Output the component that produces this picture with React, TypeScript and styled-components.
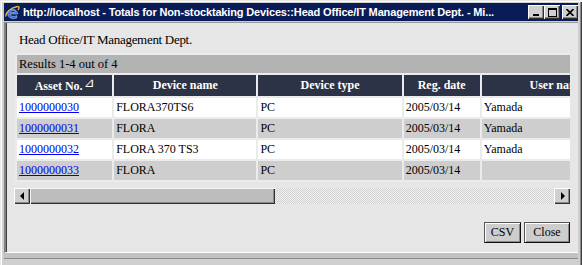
import React from 'react';
import styled, { createGlobalStyle } from 'styled-components';

const GlobalStyle = createGlobalStyle`
  body {
    margin: 0;
    background: #cfcfcf;
  }
`;

const Window = styled.div`
  width: 582px;
  height: 265px;
  box-sizing: border-box;
  display: flex;
  flex-direction: column;
  padding: 3px 4px 0 4px;
  background: #cfcfcf;
  box-shadow: inset 1px 1px #e8e8e8, inset 2px 2px #fff, inset -1px 0 #404040,
    inset -2px 0 #8a8a8a;
  overflow: hidden;
`;

const TitleBar = styled.div`
  height: 18px;
  display: flex;
  align-items: center;
  gap: 3px;
  padding: 0 0 0 1px;
  background: #0a1c58;
`;

const TitleText = styled.div`
  flex: 1;
  min-width: 0;
  white-space: nowrap;
  overflow: hidden;
  color: #fff;
  font: bold 11px 'Liberation Sans', Arial, sans-serif;
  letter-spacing: -0.15px;
`;

const Controls = styled.div`
  display: flex;
  align-items: center;
`;

const CtrlButton = styled.div<{ $gap?: boolean }>`
  width: 16px;
  height: 14px;
  box-sizing: border-box;
  margin-left: ${(p) => (p.$gap ? '2px' : '0')};
  background: #cfcfcf;
  box-shadow: inset 1px 1px #fff, inset -1px -1px #303030, inset -2px -2px #888;
  display: flex;
  align-items: center;
  justify-content: center;
`;

const Content = styled.div`
  height: 231px;
  margin-top: 1px;
  box-sizing: border-box;
  display: flex;
  flex-direction: column;
  padding: 9px 8px 0 9px;
  background: #e6e6e6;
  border-top: 1px solid #9a9a9a;
  border-left: 2px solid #808080;
  border-bottom: 1px solid #fff;
  box-shadow: inset 1px 0 #404040;
`;

const Heading = styled.div`
  margin-left: 4px;
  height: 16px;
  font: 13px/16px 'Liberation Serif', 'Times New Roman', serif;
  letter-spacing: -0.3px;
  color: #000;
`;

const TableClip = styled.div`
  margin-top: 5px;
  overflow: hidden;
  background: #ebebeb;
`;

const Table = styled.table`
  border-collapse: separate;
  border-spacing: 2px;
  table-layout: fixed;
  width: 1146px;
  font: 12px 'Liberation Serif', 'Times New Roman', serif;
  color: #000;
`;

const ResultsCell = styled.td`
  height: 18px;
  padding: 0 2px;
  background: #b3b3b3;
  font-size: 12.5px;
  text-align: left;
  white-space: nowrap;
`;

const HeadCell = styled.th`
  height: 21px;
  padding: 0 2px;
  background: #2c3346;
  color: #fff;
  font-weight: bold;
  text-align: center;
  white-space: nowrap;
`;

const SortMark = styled.span`
  font-family: 'DejaVu Sans', sans-serif;
  font-weight: normal;
  font-size: 13px;
  position: relative;
  top: -3px;
  margin-left: 1px;
`;

const Cell = styled.td<{ $alt: boolean }>`
  height: 19px;
  padding: 0 2px;
  background: ${(p) => (p.$alt ? '#cecece' : '#ffffff')};
  white-space: nowrap;
  overflow: hidden;
`;

const AssetLink = styled.a`
  color: #0000ee;
  text-decoration: underline;
`;

const Scrollbar = styled.div`
  margin-top: 6px;
  height: 16px;
  display: flex;
  width: 556px;
  margin-left: -1px;
`;

const ScrollBtn = styled.div`
  width: 16px;
  height: 16px;
  box-sizing: border-box;
  background: #cfcfcf;
  box-shadow: inset 1px 1px #fff, inset -1px -1px #303030, inset -2px -2px #8a8a8a;
  display: flex;
  align-items: center;
  justify-content: center;
`;

const Arrow = styled.div<{ $dir: 'left' | 'right' }>`
  width: 0;
  height: 0;
  border-top: 4px solid transparent;
  border-bottom: 4px solid transparent;
  ${(p) =>
    p.$dir === 'left'
      ? 'border-right: 4px solid #000; margin-left: -1px;'
      : 'border-left: 4px solid #000; margin-left: 1px;'}
`;

const Thumb = styled.div`
  width: 245px;
  height: 16px;
  box-sizing: border-box;
  background: #bdbdbd;
  box-shadow: inset 1px 1px #f4f4f4, inset -1px -1px #303030, inset -2px -2px #8a8a8a;
`;

const Track = styled.div`
  flex: 1;
  background-color: #f2f2f2;
  background-image: repeating-conic-gradient(#d0d0d0 0 25%, #f2f2f2 0 50%);
  background-size: 2px 2px;
`;

const ButtonRow = styled.div`
  margin-top: 18px;
  display: flex;
  justify-content: flex-end;
  gap: 3px;
`;

const Button = styled.button<{ $w: number }>`
  width: ${(p) => p.$w}px;
  height: 21px;
  box-sizing: border-box;
  padding: 0;
  background: #cdcdcd;
  border: 1px solid #555;
  border-right-color: #111;
  border-bottom-color: #111;
  box-shadow: inset 1px 1px #fff, inset -1px -1px #888;
  font: 12px 'Liberation Serif', 'Times New Roman', serif;
  color: #000;
`;

const FrameBottom = styled.div`
  flex: 1;
  border-top: 5px solid #c2c2c2;
  box-shadow: inset 0 1px #8a8a8a;
`;

const IeIcon = () => (
  <svg width="15" height="15" viewBox="0 0 15 15">
    <path
      d="M1 11.5 C0 8 6 2.5 12.5 1.5 C14.5 1.3 14.3 3.5 13 5"
      fill="none"
      stroke="#f2b632"
      strokeWidth="1.4"
    />
    <path
      d="M12.6 9 H5.2 C5.4 11.6 9 12.2 11.6 10.6 L12 12.6 C8.2 14.8 2.6 13.3 2.8 8.6 C3 4.3 8.4 3.2 11 5.5 C12.3 6.6 12.7 7.9 12.6 9 Z M5.3 7.3 H10.2 C9.9 4.9 5.8 4.9 5.3 7.3 Z"
      fill="#2a6fe8"
      stroke="#cfe0ff"
      strokeWidth="0.5"
      fillRule="evenodd"
    />
  </svg>
);

const columns = [
  { label: 'Asset No.', width: 95 },
  { label: 'Device name', width: 142 },
  { label: 'Device type', width: 143 },
  { label: 'Reg. date', width: 76 },
  { label: 'User name', width: 150 },
  { label: 'Location', width: 250 },
  { label: 'Remarks', width: 272 },
];

const rows = [
  ['1000000030', 'FLORA370TS6', 'PC', '2005/03/14', 'Yamada', '', ''],
  ['1000000031', 'FLORA', 'PC', '2005/03/14', 'Yamada', '', ''],
  ['1000000032', 'FLORA 370 TS3', 'PC', '2005/03/14', 'Yamada', '', ''],
  ['1000000033', 'FLORA', 'PC', '2005/03/14', '', '', ''],
];

const App: React.FC = () => {
  return (
    <>
      <GlobalStyle />
      <Window>
        <TitleBar>
          <IeIcon />
          <TitleText>
            http://localhost - Totals for Non-stocktaking Devices::Head Office/IT Management Dept. - Mi...
          </TitleText>
          <Controls>
            <CtrlButton>
              <svg width="8" height="8" viewBox="0 0 8 8">
                <rect x="1" y="6" width="6" height="2" fill="#000" />
              </svg>
            </CtrlButton>
            <CtrlButton>
              <svg width="9" height="9" viewBox="0 0 9 9">
                <rect x="0.5" y="0.5" width="8" height="8" fill="none" stroke="#000" />
                <rect x="0" y="0" width="9" height="2" fill="#000" />
              </svg>
            </CtrlButton>
            <CtrlButton $gap>
              <svg width="8" height="7" viewBox="0 0 8 7">
                <path d="M0.5 0 L7.5 7 M7.5 0 L0.5 7" stroke="#000" strokeWidth="1.6" />
              </svg>
            </CtrlButton>
          </Controls>
        </TitleBar>
        <Content>
          <Heading>Head Office/IT Management Dept.</Heading>
          <TableClip>
            <Table>
              <colgroup>
                {columns.map((c) => (
                  <col key={c.label} style={{ width: c.width }} />
                ))}
              </colgroup>
              <thead>
                <tr>
                  <ResultsCell colSpan={columns.length}>Results 1-4 out of 4</ResultsCell>
                </tr>
                <tr>
                  {columns.map((c, i) => (
                    <HeadCell key={c.label}>
                      {c.label}
                      {i === 0 && <SortMark>⊿</SortMark>}
                    </HeadCell>
                  ))}
                </tr>
              </thead>
              <tbody>
                {rows.map((r, ri) => (
                  <tr key={r[0]}>
                    {r.map((v, ci) => (
                      <Cell key={ci} $alt={ri % 2 === 1}>
                        {ci === 0 ? <AssetLink href="#">{v}</AssetLink> : v}
                      </Cell>
                    ))}
                  </tr>
                ))}
              </tbody>
            </Table>
          </TableClip>
          <Scrollbar>
            <ScrollBtn>
              <Arrow $dir="left" />
            </ScrollBtn>
            <Thumb />
            <Track />
            <ScrollBtn>
              <Arrow $dir="right" />
            </ScrollBtn>
          </Scrollbar>
          <ButtonRow>
            <Button $w={37}>CSV</Button>
            <Button $w={46}>Close</Button>
          </ButtonRow>
        </Content>
        <FrameBottom />
      </Window>
    </>
  );
};

export default App;
